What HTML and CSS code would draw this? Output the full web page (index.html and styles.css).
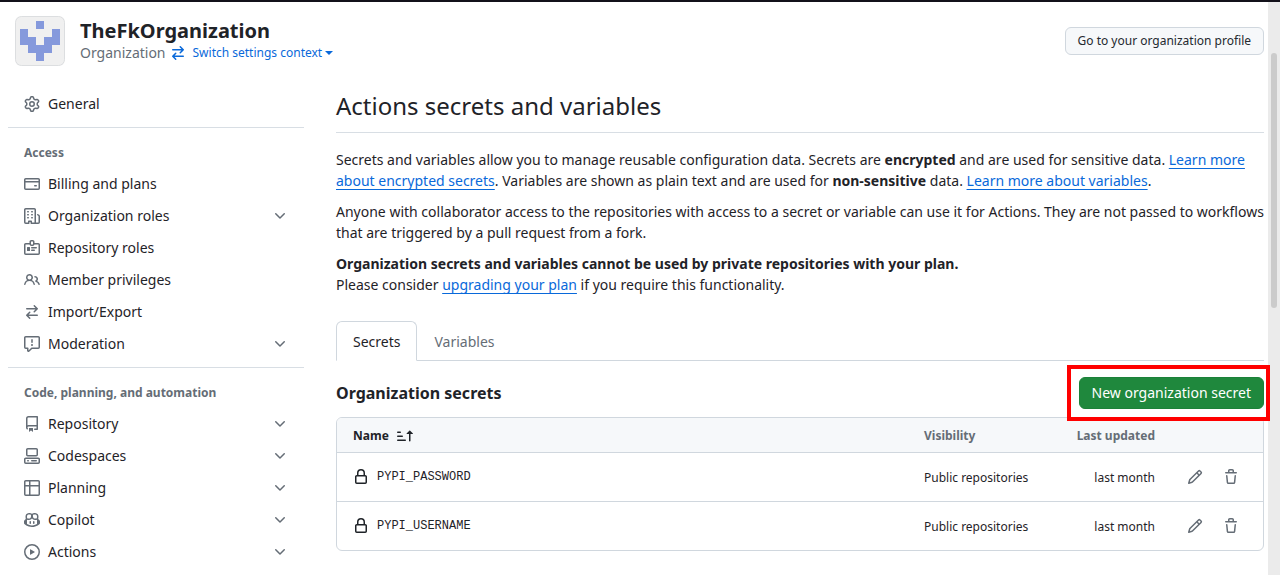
FILE: index.html
```html
<!DOCTYPE html>
<html lang="en">
<head>
<meta charset="utf-8">
<title>Actions secrets and variables</title>
<link rel="stylesheet" href="styles.css">
</head>
<body>
<svg class="sprite" aria-hidden="true">
  <symbol id="gear" viewBox="0 0 16 16"><path d="M8 0a8.2 8.2 0 0 1 .701.031C9.444.095 9.99.645 10.16 1.29l.288 1.107c.018.066.079.158.212.224.231.114.454.243.668.386.123.082.233.09.299.071l1.103-.303c.644-.176 1.392.021 1.82.63.27.385.506.792.704 1.218.315.675.111 1.422-.364 1.891l-.814.806c-.049.048-.098.147-.088.294.016.257.016.515 0 .772-.01.147.038.246.088.294l.814.806c.475.469.679 1.216.364 1.891a7.977 7.977 0 0 1-.704 1.217c-.428.61-1.176.807-1.82.63l-1.102-.302c-.067-.019-.177-.011-.3.071a5.909 5.909 0 0 1-.668.386c-.133.066-.194.158-.211.224l-.29 1.106c-.168.646-.715 1.196-1.458 1.26a8.006 8.006 0 0 1-1.402 0c-.743-.064-1.289-.614-1.458-1.26l-.289-1.106c-.018-.066-.079-.158-.212-.224a5.738 5.738 0 0 1-.668-.386c-.123-.082-.233-.09-.299-.071l-1.103.303c-.644.176-1.392-.021-1.82-.63a8.12 8.12 0 0 1-.704-1.218c-.315-.675-.111-1.422.363-1.891l.815-.806c.05-.048.098-.147.088-.294a6.214 6.214 0 0 1 0-.772c.01-.147-.038-.246-.088-.294l-.815-.806C.635 6.045.431 5.298.746 4.623a7.92 7.92 0 0 1 .704-1.217c.428-.61 1.176-.807 1.82-.63l1.102.302c.067.019.177.011.3-.071.214-.143.437-.272.668-.386.133-.066.194-.158.211-.224l.29-1.106C6.009.645 6.556.095 7.299.03 7.53.01 7.764 0 8 0Zm-.571 1.525c-.036.003-.108.036-.137.146l-.289 1.105c-.147.561-.549.967-.998 1.189-.173.086-.34.183-.5.29-.417.278-.97.423-1.529.27l-1.103-.303c-.109-.03-.175.016-.195.045-.22.312-.412.644-.573.99-.014.031-.021.11.059.19l.815.806c.411.406.562.957.53 1.456a4.709 4.709 0 0 0 0 .582c.032.499-.119 1.05-.53 1.456l-.815.806c-.081.08-.073.159-.059.19.162.346.353.677.573.989.02.03.085.076.195.046l1.102-.303c.56-.153 1.113-.008 1.53.27.161.107.328.204.501.29.447.222.85.629.997 1.189l.289 1.105c.029.109.101.143.137.146a6.6 6.6 0 0 0 1.142 0c.036-.003.108-.036.137-.146l.289-1.105c.147-.561.549-.967.998-1.189.173-.086.34-.183.5-.29.417-.278.97-.423 1.529-.27l1.103.303c.109.029.175-.016.195-.045.22-.313.411-.644.573-.99.014-.031.021-.11-.059-.19l-.815-.806c-.411-.406-.562-.957-.53-1.456a4.709 4.709 0 0 0 0-.582c-.032-.499.119-1.05.53-1.456l.815-.806c.081-.08.073-.159.059-.19a6.464 6.464 0 0 0-.573-.989c-.02-.03-.085-.076-.195-.046l-1.102.303c-.56.153-1.113.008-1.53-.27a4.44 4.44 0 0 0-.501-.29c-.447-.222-.85-.629-.997-1.189l-.289-1.105c-.029-.11-.101-.143-.137-.146a6.6 6.6 0 0 0-1.142 0ZM11 8a3 3 0 1 1-6 0 3 3 0 0 1 6 0ZM9.5 8a1.5 1.5 0 1 0-3.001.001A1.5 1.5 0 0 0 9.5 8Z"/></symbol>
  <symbol id="card" viewBox="0 0 16 16"><path d="M10.75 9a.75.75 0 0 0 0 1.5h1.5a.75.75 0 0 0 0-1.5h-1.5Z"/><path d="M0 3.75C0 2.784.784 2 1.75 2h12.5c.966 0 1.75.784 1.75 1.75v8.5A1.75 1.75 0 0 1 14.25 14H1.75A1.75 1.75 0 0 1 0 12.25ZM14.5 6.5h-13v5.75c0 .138.112.25.25.25h12.5a.25.25 0 0 0 .25-.25Zm0-2.75a.25.25 0 0 0-.25-.25H1.75a.25.25 0 0 0-.25.25V5h13Z"/></symbol>
  <symbol id="organization" viewBox="0 0 16 16"><path d="M1.75 16A1.75 1.75 0 0 1 0 14.25V1.75C0 .784.784 0 1.75 0h8.5C11.216 0 12 .784 12 1.75v12.5c0 .085-.006.168-.018.25h2.268a.25.25 0 0 0 .25-.25V8.285a.25.25 0 0 0-.111-.208l-1.055-.703a.749.749 0 1 1 .832-1.248l1.055.703c.487.325.779.871.779 1.456v5.965A1.75 1.75 0 0 1 14.25 16h-3.5a.766.766 0 0 1-.197-.026c-.099.017-.2.026-.303.026h-3a.75.75 0 0 1-.75-.75V14h-1v1.25a.75.75 0 0 1-.75.75Zm-.25-1.75c0 .138.112.25.25.25H4v-1.25a.75.75 0 0 1 .75-.75h2.5a.75.75 0 0 1 .75.75v1.25h2.25a.25.25 0 0 0 .25-.25V1.75a.25.25 0 0 0-.25-.25h-8.5a.25.25 0 0 0-.25.25ZM3.75 6h.5a.75.75 0 0 1 0 1.5h-.5a.75.75 0 0 1 0-1.5ZM3 3.75A.75.75 0 0 1 3.75 3h.5a.75.75 0 0 1 0 1.5h-.5A.75.75 0 0 1 3 3.75Zm4 3A.75.75 0 0 1 7.75 6h.5a.75.75 0 0 1 0 1.5h-.5A.75.75 0 0 1 7 6.75ZM7.75 3h.5a.75.75 0 0 1 0 1.5h-.5a.75.75 0 0 1 0-1.5ZM3 9.75A.75.75 0 0 1 3.75 9h.5a.75.75 0 0 1 0 1.5h-.5A.75.75 0 0 1 3 9.75ZM7.75 9h.5a.75.75 0 0 1 0 1.5h-.5a.75.75 0 0 1 0-1.5Z"/></symbol>
  <symbol id="badge" viewBox="0 0 16 16"><path d="M3 7.5a.5.5 0 0 1 .5-.5h2a.5.5 0 0 1 .5.5v3a.5.5 0 0 1-.5.5h-2a.5.5 0 0 1-.5-.5v-3Zm10 .25a.75.75 0 0 1-.75.75h-4.5a.75.75 0 0 1 0-1.5h4.5a.75.75 0 0 1 .75.75ZM10.25 11a.75.75 0 0 0 0-1.5h-2.5a.75.75 0 0 0 0 1.5h2.5Z"/><path d="M7.25 0h1.5c.966 0 1.75.784 1.75 1.75V3h3.75c.966 0 1.75.784 1.75 1.75v8.5A1.75 1.75 0 0 1 14.25 15H1.75A1.75 1.75 0 0 1 0 13.25v-8.5C0 3.784.784 3 1.75 3H5.5V1.75C5.5.784 6.284 0 7.25 0Zm3.232 4.5A1.75 1.75 0 0 1 8.75 6h-1.5a1.75 1.75 0 0 1-1.732-1.5H1.75a.25.25 0 0 0-.25.25v8.5c0 .138.112.25.25.25h12.5a.25.25 0 0 0 .25-.25v-8.5a.25.25 0 0 0-.25-.25ZM7 1.75v2.5c0 .138.112.25.25.25h1.5A.25.25 0 0 0 9 4.25v-2.5a.25.25 0 0 0-.25-.25h-1.5a.25.25 0 0 0-.25.25Z"/></symbol>
  <symbol id="people" viewBox="0 0 16 16"><path d="M2 5.5a3.5 3.5 0 1 1 5.898 2.549 5.508 5.508 0 0 1 3.034 4.084.75.75 0 1 1-1.482.235 4 4 0 0 0-7.9 0 .75.75 0 0 1-1.482-.236A5.507 5.507 0 0 1 3.102 8.05 3.493 3.493 0 0 1 2 5.5ZM11 4a3.001 3.001 0 0 1 2.22 5.018 5.01 5.01 0 0 1 2.56 3.012.749.749 0 0 1-.885.954.752.752 0 0 1-.549-.514 3.507 3.507 0 0 0-2.522-2.372.75.75 0 0 1-.574-.73v-.352a.75.75 0 0 1 .416-.672A1.5 1.5 0 0 0 11 5.5.75.75 0 0 1 11 4Zm-5.5-.5a2 2 0 1 0-.001 3.999A2 2 0 0 0 5.5 3.5Z"/></symbol>
  <symbol id="switch" viewBox="0 0 16 16"><path d="M5.22 14.78a.75.75 0 0 0 1.06-1.06L4.56 12h8.69a.75.75 0 0 0 0-1.5H4.56l1.72-1.72a.75.75 0 0 0-1.06-1.06l-3 3a.75.75 0 0 0 0 1.06l3 3Zm5.56-6.5a.75.75 0 1 1-1.06-1.06l1.72-1.72H2.75a.75.75 0 0 1 0-1.5h8.69L9.72 2.28a.75.75 0 0 1 1.06-1.06l3 3a.75.75 0 0 1 0 1.06l-3 3Z"/></symbol>
  <symbol id="report" viewBox="0 0 16 16"><path d="M0 1.75C0 .784.784 0 1.75 0h12.5C15.216 0 16 .784 16 1.75v9.5A1.75 1.75 0 0 1 14.25 13H8.06l-2.573 2.573A1.458 1.458 0 0 1 3 14.543V13H1.75A1.75 1.75 0 0 1 0 11.25Zm1.75-.25a.25.25 0 0 0-.25.25v9.5c0 .138.112.25.25.25h2a.75.75 0 0 1 .75.75v2.19l2.72-2.72a.749.749 0 0 1 .53-.22h6.5a.25.25 0 0 0 .25-.25v-9.5a.25.25 0 0 0-.25-.25Zm7 2.25v2.5a.75.75 0 0 1-1.5 0v-2.5a.75.75 0 0 1 1.5 0ZM9 9a1 1 0 1 1-2 0 1 1 0 0 1 2 0Z"/></symbol>
  <symbol id="repo" viewBox="0 0 16 16"><path d="M2 2.5A2.5 2.5 0 0 1 4.5 0h8.75a.75.75 0 0 1 .75.75v12.5a.75.75 0 0 1-.75.75h-2.5a.75.75 0 0 1 0-1.5h1.75v-2h-8a1 1 0 0 0-.714 1.7.75.75 0 1 1-1.072 1.05A2.495 2.495 0 0 1 2 11.5Zm10.5-1h-8a1 1 0 0 0-1 1v6.708A2.486 2.486 0 0 1 4.5 9h8ZM5 12.25a.25.25 0 0 1 .25-.25h3.5a.25.25 0 0 1 .25.25v3.25a.25.25 0 0 1-.4.2l-1.45-1.087a.249.249 0 0 0-.3 0L5.4 15.7a.25.25 0 0 1-.4-.2Z"/></symbol>
  <symbol id="codespaces" viewBox="0 0 16 16"><path d="M0 11.25c0-.966.784-1.75 1.75-1.75h12.5c.966 0 1.75.784 1.75 1.75v3A1.75 1.75 0 0 1 14.25 16H1.75A1.75 1.75 0 0 1 0 14.25Zm2-9.5C2 .784 2.784 0 3.75 0h8.5C13.216 0 14 .784 14 1.75v5a1.75 1.75 0 0 1-1.75 1.75h-8.5A1.75 1.75 0 0 1 2 6.75Zm1.75-.25a.25.25 0 0 0-.25.25v5c0 .138.112.25.25.25h8.5a.25.25 0 0 0 .25-.25v-5a.25.25 0 0 0-.25-.25Zm-2 9.5a.25.25 0 0 0-.25.25v3c0 .138.112.25.25.25h12.5a.25.25 0 0 0 .25-.25v-3a.25.25 0 0 0-.25-.25Z"/><path d="M7 12.75a.75.75 0 0 1 .75-.75h4.5a.75.75 0 0 1 0 1.5h-4.5a.75.75 0 0 1-.75-.75Zm-4 0a.75.75 0 0 1 .75-.75h.5a.75.75 0 0 1 0 1.5h-.5a.75.75 0 0 1-.75-.75Z"/></symbol>
  <symbol id="table" viewBox="0 0 16 16"><path d="M0 1.75C0 .784.784 0 1.75 0h12.5C15.216 0 16 .784 16 1.75v12.5A1.75 1.75 0 0 1 14.25 16H1.75A1.75 1.75 0 0 1 0 14.25ZM6.5 6.5v8h7.75a.25.25 0 0 0 .25-.25V6.5Zm8-1.5V1.75a.25.25 0 0 0-.25-.25H6.5V5Zm-13 1.5v7.75c0 .138.112.25.25.25H5v-8ZM5 5V1.5H1.75a.25.25 0 0 0-.25.25V5Z"/></symbol>
  <symbol id="copilot" viewBox="0 0 16 16"><path d="M7.998 15.035c-4.562 0-7.873-2.914-7.998-3.749V9.338c.085-.628.677-1.686 1.588-2.065.013-.07.024-.143.036-.218.029-.183.06-.384.126-.612-.201-.508-.254-1.084-.254-1.656 0-.87.128-1.769.693-2.484.579-.733 1.494-1.124 2.724-1.261 1.206-.134 2.262.034 2.944.765.05.053.096.108.139.165.044-.057.094-.112.143-.165.682-.731 1.738-.899 2.944-.765 1.23.137 2.145.528 2.724 1.261.566.715.693 1.614.693 2.484 0 .572-.053 1.148-.254 1.656.066.228.098.429.126.612.012.076.024.148.037.218.924.385 1.522 1.471 1.591 2.095v1.872c0 .766-3.351 3.795-8.002 3.795Zm0-1.485c2.28 0 4.584-1.11 5.002-1.433V7.862l-.023-.116c-.49.21-1.075.291-1.727.291-1.146 0-2.059-.327-2.71-.991A3.222 3.222 0 0 1 8 6.303a3.24 3.24 0 0 1-.544.743c-.65.664-1.563.991-2.71.991-.652 0-1.236-.081-1.727-.291l-.023.116v4.255c.419.323 2.722 1.433 5.002 1.433ZM6.762 2.83c-.193-.206-.637-.413-1.682-.297-1.019.113-1.479.404-1.713.7-.247.312-.369.789-.369 1.554 0 .793.129 1.171.308 1.371.162.181.519.379 1.442.379.853 0 1.339-.235 1.638-.54.315-.322.527-.827.617-1.553.117-.935-.037-1.395-.241-1.614Zm4.155-.297c-1.044-.116-1.488.091-1.681.297-.204.219-.359.679-.242 1.614.091.726.303 1.231.618 1.553.299.305.784.54 1.638.54.922 0 1.28-.198 1.442-.379.179-.2.308-.578.308-1.371 0-.765-.123-1.242-.37-1.554-.233-.296-.693-.587-1.713-.7Z"/><path d="M6.25 9.037a.75.75 0 0 1 .75.75v1.501a.75.75 0 0 1-1.5 0V9.787a.75.75 0 0 1 .75-.75Zm4.25.75v1.501a.75.75 0 0 1-1.5 0V9.787a.75.75 0 0 1 1.5 0Z"/></symbol>
  <symbol id="play" viewBox="0 0 16 16"><path d="M8 0a8 8 0 1 1 0 16A8 8 0 0 1 8 0ZM1.5 8a6.5 6.5 0 1 0 13 0 6.5 6.5 0 0 0-13 0Zm4.879-2.773 4.264 2.559a.25.25 0 0 1 0 .428l-4.264 2.559A.25.25 0 0 1 6 10.559V5.442a.25.25 0 0 1 .379-.215Z"/></symbol>
  <symbol id="chevron" viewBox="0 0 16 16"><path d="M12.78 5.22a.749.749 0 0 1 0 1.06l-4.25 4.25a.749.749 0 0 1-1.06 0L3.22 6.28a.749.749 0 1 1 1.06-1.06L8 8.939l3.72-3.719a.749.749 0 0 1 1.06 0Z"/></symbol>
  <symbol id="lock" viewBox="0 0 16 16"><path d="M4 4a4 4 0 0 1 8 0v2h.25c.966 0 1.75.784 1.75 1.75v5.5A1.75 1.75 0 0 1 12.25 15h-8.5A1.75 1.75 0 0 1 2 13.25v-5.5C2 6.784 2.784 6 3.75 6H4Zm8.25 3.5h-8.5a.25.25 0 0 0-.25.25v5.5c0 .138.112.25.25.25h8.5a.25.25 0 0 0 .25-.25v-5.5a.25.25 0 0 0-.25-.25ZM10.5 6V4a2.5 2.5 0 1 0-5 0v2Z"/></symbol>
  <symbol id="pencil" viewBox="0 0 16 16"><path d="M11.013 1.427a1.75 1.75 0 0 1 2.474 0l1.086 1.086a1.75 1.75 0 0 1 0 2.474l-8.61 8.61c-.21.21-.47.364-.756.445l-3.251.93a.75.75 0 0 1-.927-.928l.929-3.25c.081-.286.235-.547.445-.758l8.61-8.61Zm.176 4.823L9.75 4.81l-6.286 6.287a.253.253 0 0 0-.064.108l-.558 1.953 1.953-.558a.253.253 0 0 0 .108-.064Zm1.238-3.763a.25.25 0 0 0-.354 0L10.811 3.75l1.439 1.44 1.263-1.263a.25.25 0 0 0 0-.354Z"/></symbol>
  <symbol id="trash" viewBox="0 0 16 16"><path d="M11 1.75V3h2.25a.75.75 0 0 1 0 1.5H2.75a.75.75 0 0 1 0-1.5H5V1.75C5 .784 5.784 0 6.75 0h2.5C10.216 0 11 .784 11 1.75ZM4.496 6.675l.66 6.6a.25.25 0 0 0 .249.225h5.19a.25.25 0 0 0 .249-.225l.66-6.6a.75.75 0 0 1 1.492.149l-.66 6.6A1.748 1.748 0 0 1 10.595 15h-5.19a1.75 1.75 0 0 1-1.741-1.575l-.66-6.6a.75.75 0 1 1 1.492-.15ZM6.5 1.75V3h3V1.75a.25.25 0 0 0-.25-.25h-2.5a.25.25 0 0 0-.25.25Z"/></symbol>
  <symbol id="sort" viewBox="0 0 16 16"><path d="m12.927 2.573 3 3A.25.25 0 0 1 15.75 6H13.5v6.75a.75.75 0 0 1-1.5 0V6H9.75a.25.25 0 0 1-.177-.427l3-3a.25.25 0 0 1 .354 0ZM0 12.25a.75.75 0 0 1 .75-.75h7.5a.75.75 0 0 1 0 1.5H.75a.75.75 0 0 1-.75-.75Zm0-4a.75.75 0 0 1 .75-.75h4.5a.75.75 0 0 1 0 1.5H.75A.75.75 0 0 1 0 8.25Zm0-4a.75.75 0 0 1 .75-.75h2.5a.75.75 0 0 1 0 1.5H.75A.75.75 0 0 1 0 4.25Z"/></symbol>
</svg>

<div class="window">
  <div class="page">
    <header class="org-header">
      <svg class="avatar" viewBox="0 0 50 50" role="img" aria-label="TheFkOrganization avatar" shape-rendering="crispEdges">
        <rect width="50" height="50" fill="#f0f0f0"/>
        <path fill="#8599dc" d="M21 5h8v8h-8zM5 13h8v8h8v8h8v-8h8v-8h8v16h-8v8h-8v8h-8v-8h-8v-8H5z"/>
        <rect x=".5" y=".5" width="49" height="49" rx="6" fill="none" stroke="#dcdee0" shape-rendering="auto"/>
      </svg>
      <div class="org-info">
        <h2 class="org-name">TheFkOrganization</h2>
        <div class="org-meta">
          <span class="org-kind">Organization</span>
          <button class="context-switch" type="button"><svg class="icon"><use href="#switch"/></svg><span>Switch settings context</span><span class="caret"></span></button>
        </div>
      </div>
      <a class="btn" href="#profile">Go to your organization profile</a>
    </header>

    <div class="columns">
      <nav class="sidebar" aria-label="Settings">
        <ul class="nav-list">
          <li><a class="nav-item" href="#general"><svg class="icon"><use href="#gear"/></svg><span>General</span></a></li>
        </ul>
        <hr class="nav-divider">
        <h3 class="nav-title">Access</h3>
        <ul class="nav-list">
          <li><a class="nav-item" href="#billing"><svg class="icon"><use href="#card"/></svg><span>Billing and plans</span></a></li>
          <li><button class="nav-item" type="button"><svg class="icon"><use href="#organization"/></svg><span>Organization roles</span><svg class="icon chevron"><use href="#chevron"/></svg></button></li>
          <li><a class="nav-item" href="#repo-roles"><svg class="icon"><use href="#badge"/></svg><span>Repository roles</span></a></li>
          <li><a class="nav-item" href="#members"><svg class="icon"><use href="#people"/></svg><span>Member privileges</span></a></li>
          <li><a class="nav-item" href="#import"><svg class="icon"><use href="#switch"/></svg><span>Import/Export</span></a></li>
          <li><button class="nav-item" type="button"><svg class="icon"><use href="#report"/></svg><span>Moderation</span><svg class="icon chevron"><use href="#chevron"/></svg></button></li>
        </ul>
        <hr class="nav-divider">
        <h3 class="nav-title">Code, planning, and automation</h3>
        <ul class="nav-list">
          <li><button class="nav-item" type="button"><svg class="icon"><use href="#repo"/></svg><span>Repository</span><svg class="icon chevron"><use href="#chevron"/></svg></button></li>
          <li><button class="nav-item" type="button"><svg class="icon"><use href="#codespaces"/></svg><span>Codespaces</span><svg class="icon chevron"><use href="#chevron"/></svg></button></li>
          <li><button class="nav-item" type="button"><svg class="icon"><use href="#table"/></svg><span>Planning</span><svg class="icon chevron"><use href="#chevron"/></svg></button></li>
          <li><button class="nav-item" type="button"><svg class="icon"><use href="#copilot"/></svg><span>Copilot</span><svg class="icon chevron"><use href="#chevron"/></svg></button></li>
          <li><button class="nav-item" type="button"><svg class="icon"><use href="#play"/></svg><span>Actions</span><svg class="icon chevron"><use href="#chevron"/></svg></button></li>
        </ul>
      </nav>

      <main class="content">
        <h1 class="page-title">Actions secrets and variables</h1>
        <p class="text">Secrets and variables allow you to manage reusable configuration data. Secrets are <strong>encrypted</strong> and are used for sensitive data. <a class="link" href="#encrypted">Learn more about encrypted secrets</a>. Variables are shown as plain text and are used for <strong>non-sensitive</strong> data. <a class="link" href="#variables-docs">Learn more about variables</a>.</p>
        <p class="text">Anyone with collaborator access to the repositories with access to a secret or variable can use it for Actions. They are not passed to workflows that are triggered by a pull request from a fork.</p>
        <p class="text"><strong>Organization secrets and variables cannot be used by private repositories with your plan.</strong><br>Please consider <a class="link" href="#upgrade">upgrading your plan</a> if you require this functionality.</p>

        <nav class="tabs" aria-label="Secrets and variables">
          <a class="tab tab-selected" href="#secrets" aria-current="page">Secrets</a>
          <a class="tab" href="#variables">Variables</a>
        </nav>

        <div class="section-head">
          <h2 class="section-title">Organization secrets</h2>
          <div class="highlight"><button class="btn-primary" type="button">New organization secret</button></div>
        </div>

        <table class="secrets">
          <thead>
            <tr>
              <th class="col-name"><button class="sort" type="button">Name<svg class="icon"><use href="#sort"/></svg></button></th>
              <th class="col-visibility">Visibility</th>
              <th class="col-updated">Last updated</th>
              <th class="col-actions" aria-label="Actions"></th>
            </tr>
          </thead>
          <tbody>
            <tr>
              <td><div class="secret"><svg class="icon"><use href="#lock"/></svg><code>PYPI_PASSWORD</code></div></td>
              <td>Public repositories</td>
              <td class="col-updated">last month</td>
              <td><div class="row-actions"><button class="icon-btn" type="button" aria-label="Edit PYPI_PASSWORD"><svg class="icon"><use href="#pencil"/></svg></button><button class="icon-btn" type="button" aria-label="Delete PYPI_PASSWORD"><svg class="icon"><use href="#trash"/></svg></button></div></td>
            </tr>
            <tr>
              <td><div class="secret"><svg class="icon"><use href="#lock"/></svg><code>PYPI_USERNAME</code></div></td>
              <td>Public repositories</td>
              <td class="col-updated">last month</td>
              <td><div class="row-actions"><button class="icon-btn" type="button" aria-label="Edit PYPI_USERNAME"><svg class="icon"><use href="#pencil"/></svg></button><button class="icon-btn" type="button" aria-label="Delete PYPI_USERNAME"><svg class="icon"><use href="#trash"/></svg></button></div></td>
            </tr>
          </tbody>
        </table>
      </main>
    </div>
  </div>
  <div class="scrollbar" aria-hidden="true"><div class="thumb"></div></div>
</div>
</body>
</html>
```
FILE: styles.css
```css
* { box-sizing: border-box; }

body {
  margin: 0;
  background: #fff;
  color: #1f2328;
  font: 14px/21px "Noto Sans", "Liberation Sans", sans-serif;
}

h1, h2, h3, p, ul { margin: 0; padding: 0; }
ul { list-style: none; }
strong { font-weight: 700; }
button { font: inherit; color: inherit; background: none; border: 0; padding: 0; cursor: pointer; }
a { color: inherit; text-decoration: none; }

.sprite { display: none; }
.icon { width: 16px; height: 16px; flex: none; fill: currentColor; }

.window {
  display: flex;
  height: 100vh;
  overflow: hidden;
  border-top: 2px solid #13111a;
}
.page { flex: 1; min-width: 0; padding: 12px 4px 0 8px; }

.scrollbar { width: 12px; padding: 51px 3px 0; background: #ebebeb; }
.thumb { height: 255px; border-radius: 3px; background: #cbcbcb; }

/* Organization header */
.org-header { display: flex; align-items: center; padding-left: 7px; height: 54px; }
.avatar { width: 50px; height: 50px; border-radius: 6px; }
.org-info { flex: 1; margin-left: 15px; }
.org-name { font-size: 20px; line-height: 24px; font-weight: 700; }
.org-meta { display: flex; align-items: center; line-height: 20px; }
.org-kind { color: #656d76; }
.context-switch {
  display: flex;
  align-items: center;
  margin-left: 4px;
  color: #0969da;
  font-size: 12px;
  line-height: 20px;
}
.context-switch .icon { margin-right: 7px; }
.caret { margin-left: 3px; border: 4px solid transparent; border-top-color: currentColor; border-bottom: 0; }

.btn {
  padding: 3px 12px;
  border: 1px solid #d0d7de;
  border-radius: 6px;
  background: #f6f8fa;
  color: #24292f;
  font-size: 12px;
  line-height: 20px;
}

/* Columns */
.columns { display: flex; gap: 32px; padding-top: 20px; }
.sidebar { width: 296px; flex: none; }
.content { flex: 1; min-width: 0; }

.nav-item {
  display: flex;
  align-items: center;
  gap: 8px;
  width: 100%;
  padding: 6px 16px;
  line-height: 20px;
  text-align: left;
}
.nav-item .icon { color: #656d76; }
.chevron { margin-left: auto; }
.nav-divider { height: 1px; margin: 7px 0 8px; border: 0; background: #d8dee4; }
.nav-title { padding: 8px 16px 6px; color: #656d76; font-size: 12px; line-height: 18px; font-weight: 700; }

/* Content */
.page-title {
  margin-bottom: 16px;
  padding-bottom: 8px;
  border-bottom: 1px solid #d8dee4;
  font-size: 24px;
  line-height: 36px;
  font-weight: 400;
}
.text { margin-bottom: 10px; }
.link { color: #0969da; text-decoration: underline; text-underline-offset: 3px; text-decoration-skip-ink: none; }

.tabs { display: flex; margin-top: 26px; border-bottom: 1px solid #d0d7de; }
.tab { margin-bottom: -1px; padding: 9px 16px 8px; border: 1px solid transparent; line-height: 21px; color: #656d76; }
.tab-selected { border-color: #d0d7de; border-bottom: 1px solid #fff; border-radius: 6px 6px 0 0; background: #fff; color: #1f2328; }

.section-head { display: flex; justify-content: space-between; align-items: center; padding: 16px 0 8px; }
.section-title { font-size: 16px; line-height: 24px; font-weight: 700; }

.btn-primary {
  padding: 5px 12px;
  border: 1px solid #1c8139;
  border-radius: 6px;
  background: #1f883d;
  color: #fff;
  line-height: 20px;
}
.highlight { position: relative; }
.highlight::after {
  content: "";
  position: absolute;
  inset: -12px -6px -12px -12px;
  border: 4px solid #f00;
  pointer-events: none;
}

/* Secrets table */
.secrets {
  width: 100%;
  table-layout: fixed;
  border: 1px solid #d0d7de;
  border-radius: 6px;
  border-spacing: 0;
  font-size: 12px;
  line-height: 19px;
  overflow: hidden;
}
.secrets th { padding: 8px 0 7px; background: #f6f8fa; color: #656d76; font-weight: 700; text-align: left; }
.secrets td { padding: 15px 0 14px; border-top: 1px solid #d0d7de; vertical-align: top; }
.secrets th:first-child, .secrets td:first-child { padding-left: 16px; }
.secrets .col-updated { text-align: right; }
.col-visibility { width: 151px; }
.col-updated { width: 80px; }
.col-actions { width: 108px; }
.sort { display: flex; align-items: center; gap: 8px; color: #1f2328; }
.secret { display: flex; align-items: center; gap: 8px; height: 18px; }
.secret code { font: 12px/20px "Liberation Mono", monospace; }
.row-actions { display: flex; justify-content: flex-end; gap: 20px; height: 18px; padding-right: 24px; color: #656d76; }
.icon-btn { display: flex; align-items: center; }
```
